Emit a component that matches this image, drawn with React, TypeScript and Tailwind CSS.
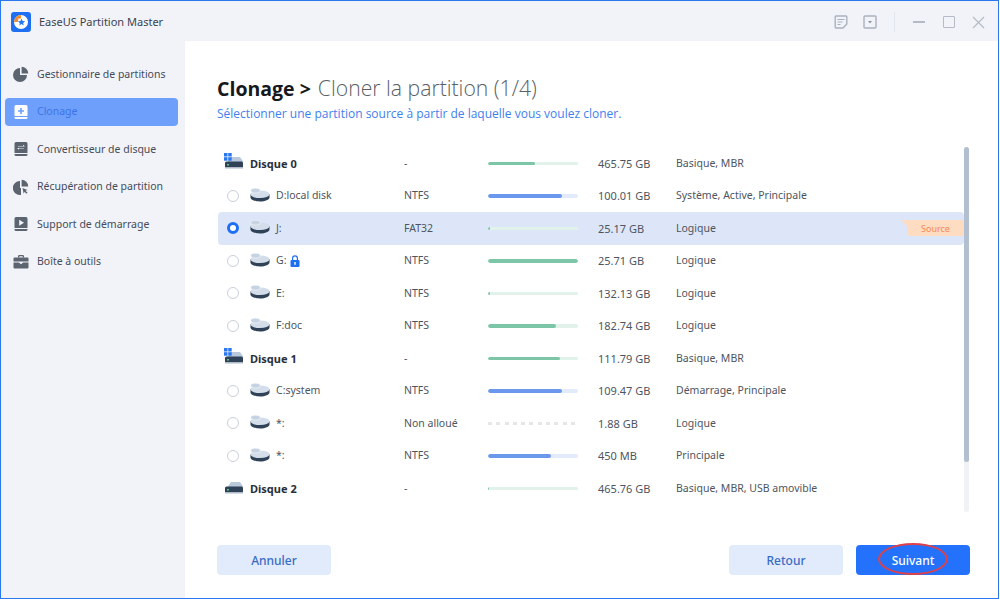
import React from 'react';

const FONT = 'font-["Noto_Sans","Open_Sans",sans-serif]';

type Row =
    | { kind: 'disk'; name: string; icon: 'win' | 'plain'; fs: string; pct: number; color: 'green'; size: string; type: string }
    | { kind: 'part'; name: string; fs: string; pct: number; color: 'green' | 'blue' | 'empty'; size: string; type: string; selected?: boolean; locked?: boolean };

const rows: Row[] = [
    { kind: 'disk', name: 'Disque 0', icon: 'win', fs: '-', pct: 52, color: 'green', size: '465.75 GB', type: 'Basique, MBR' },
    { kind: 'part', name: 'D:local disk', fs: 'NTFS', pct: 82, color: 'blue', size: '100.01 GB', type: 'Système, Active, Principale' },
    { kind: 'part', name: 'J:', fs: 'FAT32', pct: 2, color: 'green', size: '25.17 GB', type: 'Logique', selected: true },
    { kind: 'part', name: 'G:', fs: 'NTFS', pct: 100, color: 'green', size: '25.71 GB', type: 'Logique', locked: true },
    { kind: 'part', name: 'E:', fs: 'NTFS', pct: 2, color: 'green', size: '132.13 GB', type: 'Logique' },
    { kind: 'part', name: 'F:doc', fs: 'NTFS', pct: 76, color: 'green', size: '182.74 GB', type: 'Logique' },
    { kind: 'disk', name: 'Disque 1', icon: 'win', fs: '-', pct: 80, color: 'green', size: '111.79 GB', type: 'Basique, MBR' },
    { kind: 'part', name: 'C:system', fs: 'NTFS', pct: 82, color: 'blue', size: '109.47 GB', type: 'Démarrage, Principale' },
    { kind: 'part', name: '*:', fs: 'Non alloué', pct: 0, color: 'empty', size: '1.88 GB', type: 'Logique' },
    { kind: 'part', name: '*:', fs: 'NTFS', pct: 70, color: 'blue', size: '450 MB', type: 'Principale' },
    { kind: 'disk', name: 'Disque 2', icon: 'plain', fs: '-', pct: 1, color: 'green', size: '465.76 GB', type: 'Basique, MBR, USB amovible' },
];

const PieIcon = () => (
    <svg width="16" height="16" viewBox="0 0 16 16">
        <path d="M7 2a7 7 0 1 0 7 7H7z" fill="#5c6470" />
        <path d="M8.6 0.8a6.6 6.6 0 0 1 6.6 6.6H8.6z" fill="#5c6470" />
    </svg>
);

const CloneIcon = () => (
    <svg width="16" height="16" viewBox="0 0 16 16">
        <path d="M3 1h10a1.5 1.5 0 0 1 1.5 1.5V12h-13V2.5A1.5 1.5 0 0 1 3 1z" fill="#ffffff" />
        <path d="M1.5 13h13v.5A1.5 1.5 0 0 1 13 15H3a1.5 1.5 0 0 1-1.5-1.5z" fill="#ffffff" />
        <path d="M7.2 4h1.6v2.2H11v1.6H8.8V10H7.2V7.8H5V6.2h2.2z" fill="#6ea0fb" />
    </svg>
);

const ConvertIcon = () => (
    <svg width="16" height="16" viewBox="0 0 16 16">
        <path d="M3 1h10a1.5 1.5 0 0 1 1.5 1.5V12h-13V2.5A1.5 1.5 0 0 1 3 1z" fill="#5c6470" />
        <path d="M1.5 13h13v.5A1.5 1.5 0 0 1 13 15H3a1.5 1.5 0 0 1-1.5-1.5z" fill="#5c6470" />
        <path d="M5 5h5V3.800L12 5.600H5zM11 7.500H6v1.200L4 6.900h7z" fill="#f2f3f8" />
    </svg>
);

const RecoverIcon = () => (
    <svg width="16" height="16" viewBox="0 0 16 16">
        <path d="M7 2a7 7 0 1 0 1 13.900V9H7z" fill="#5c6470" />
        <path d="M8.6 0.8a6.6 6.6 0 0 1 6.6 6.6H8.6z" fill="#5c6470" />
        <path d="M9.5 9l5 2-2 .8 2 2-1 1-2-2-.8 2z" fill="#5c6470" />
    </svg>
);

const BootIcon = () => (
    <svg width="16" height="16" viewBox="0 0 16 16">
        <path d="M3 1h10a1.5 1.5 0 0 1 1.5 1.5V12h-13V2.5A1.5 1.5 0 0 1 3 1z" fill="#5c6470" />
        <path d="M1.5 13h13v.5A1.5 1.5 0 0 1 13 15H3a1.5 1.5 0 0 1-1.5-1.5z" fill="#5c6470" />
        <path d="M6.2 3.800L11 6.800 6.200 9.800z" fill="#f2f3f8" />
    </svg>
);

const ToolboxIcon = () => (
    <svg width="16" height="16" viewBox="0 0 16 16">
        <path d="M5 3.500V2.200A1.200 1.200 0 0 1 6.200 1h3.600A1.200 1.200 0 0 1 11 2.200v1.300H9.700V2.300H6.300v1.200z" fill="#5c6470" />
        <path d="M1.500 3.500h13A1 1 0 0 1 15.500 4.500V7.500H.5V4.500A1 1 0 0 1 1.500 3.500z" fill="#5c6470" />
        <path d="M.5 8.500h5.300L8 10.300l2.200-1.800h5.300v5a1 1 0 0 1-1 1h-13a1 1 0 0 1-1-1z" fill="#5c6470" />
    </svg>
);

const menu = [
    { label: 'Gestionnaire de partitions', icon: <PieIcon /> },
    { label: 'Clonage', icon: <CloneIcon />, active: true },
    { label: 'Convertisseur de disque', icon: <ConvertIcon /> },
    { label: 'Récupération de partition', icon: <RecoverIcon /> },
    { label: 'Support de démarrage', icon: <BootIcon /> },
    { label: 'Boîte à outils', icon: <ToolboxIcon /> },
];

const Logo = () => (
    <svg width="20" height="20" viewBox="0 0 20 20">
        <rect width="20" height="20" rx="3" fill="#1f6ff2" />
        <circle cx="10" cy="10" r="7" fill="#ffffff" />
        <path d="M3 10a7 7 0 0 1 7-7v3.500H7.500L6.800 10z" fill="#f28a2e" />
        <path d="M10.500 6.500l1.100 2.400 2.500.3-1.900 1.700.5 2.500-2.200-1.300-2.200 1.300.5-2.500-1.900-1.700 2.500-.3z" fill="#2a78f0" />
    </svg>
);

const DiskIcon = ({ win }: { win: boolean }) => (
    <svg width="22" height="20" viewBox="0 0 22 20">
        <path d="M3.500 9L7 4h9l3.500 5z" fill="#b9c8da" />
        <path d="M1 10A1.500 1.500 0 0 1 2.500 8.500h15A1.500 1.500 0 0 1 19 10v4.500H1z" fill="#2f4257" />
        <rect x="1" y="14.500" width="18" height="1.300" fill="#c9d4e0" />
        <rect x="3" y="11" width="2" height="1.500" fill="#5fc27e" />
        {win && (
            <g fill="#2a78f0">
                <rect x="0" y="0" width="3.500" height="3.500" />
                <rect x="4.200" y="0" width="3.500" height="3.500" />
                <rect x="0" y="4.200" width="3.500" height="3.500" />
                <rect x="4.200" y="4.200" width="3.500" height="3.500" />
            </g>
        )}
    </svg>
);

const PartIcon = () => (
    <svg className="-mt-[2px]" width="20" height="14" viewBox="0 0 20 14">
        <path d="M.5 6v3.500C.5 11.800 4.800 13.500 10 13.500s9.500-1.700 9.500-4V6z" fill="#2f4257" />
        <ellipse cx="10" cy="6.200" rx="9.500" ry="3.800" fill="#d3deea" />
        <ellipse cx="5.500" cy="2.600" rx="4.700" ry="2.400" fill="#c6d3e2" stroke="#ffffff" strokeWidth="0.500" />
    </svg>
);

const LockIcon = () => (
    <svg width="10" height="12" viewBox="0 0 10 12">
        <path d="M2 5V3.200a3 3 0 0 1 6 0V5H6.800V3.200a1.800 1.800 0 0 0-3.600 0V5z" fill="#1f6ff2" />
        <rect x="0.500" y="5" width="9" height="7" rx="1" fill="#1f6ff2" />
        <rect x="4.300" y="7" width="1.400" height="2.800" fill="#ffffff" />
    </svg>
);

const UsageBar = ({ pct, color }: { pct: number; color: 'green' | 'blue' | 'empty' }) => {
    if (color === 'empty') {
        return (
            <div className="w-[90px] h-[3.5px] overflow-hidden flex gap-[4.3px]">
                {Array.from({ length: 12 }).map((_, i) => (
                    <div key={i} className="w-[4px] h-[3.5px] shrink-0 bg-[#e6e7e9]"></div>
                ))}
            </div>
        );
    }
    return (
        <div className={`w-[90px] h-[3.5px] rounded-sm overflow-hidden ${color === 'blue' ? 'bg-[#e3eafa]' : 'bg-[#e0f2ea]'}`}>
            <div
                className={`h-full rounded-sm ${color === 'blue' ? 'bg-[#6b97ec]' : 'bg-[#7cc5a6]'}`}
                style={{ width: `${pct}%` }}
            ></div>
        </div>
    );
};

const ListRow = ({ row }: { row: Row }) => {
    const isDisk = row.kind === 'disk';
    const selected = row.kind === 'part' && row.selected;
    return (
        <div className={`flex items-center h-[32.5px] text-[10.5px] text-[#4e5560] rounded-sm ${selected ? 'bg-[#dce6f8]' : ''}`}>
            <div className="w-[186px] flex items-center shrink-0">
                {isDisk ? (
                    <>
                        <div className="ml-[6px] w-[26px] shrink-0 flex"><DiskIcon win={row.kind === 'disk' && row.icon === 'win'} /></div>
                        <span className="pt-px font-bold text-[11px] text-[#2a2f38]">{row.name}</span>
                    </>
                ) : (
                    <>
                        <div className={`ml-[9px] w-[12px] h-[12px] rounded-full shrink-0 bg-white ${selected ? 'border-[3.5px] border-[#1f6ff2]' : 'border-[1.5px] border-[#c9d0da]'}`}></div>
                        <div className="ml-[11px] w-[26px] shrink-0 flex"><PartIcon /></div>
                        <span className="pt-px flex items-center gap-[4px]">
                            {row.name}
                            {row.kind === 'part' && row.locked && <LockIcon />}
                        </span>
                    </>
                )}
            </div>
            <div className="w-[84px] shrink-0 pt-px">{row.fs}</div>
            <div className="w-[110px] shrink-0"><UsageBar pct={row.pct} color={row.color} /></div>
            <div className="w-[78px] shrink-0 pt-px text-[11px]">{row.size}</div>
            <div className="flex-1 pt-px">{row.type}</div>
            {selected && (
                <div className="relative w-[57px] h-[16px] bg-[#fddcc2] rounded-bl-sm flex items-center justify-center text-[9px] text-[#f58a56]">
                    <span className="absolute left-[-6px] top-0 w-0 h-0 border-t-[6px] border-t-[#fddcc2] border-l-[6px] border-l-transparent"></span>
                    Source
                </div>
            )}
        </div>
    );
};

export default function App() {
    return (
        <div className={`w-[999px] h-[599px] flex flex-col border border-[#2a78f0] bg-[#f2f3f8] overflow-hidden ${FONT}`}>
            <div className="h-[40px] shrink-0 flex items-center pt-[2px]">
                <div className="ml-[10px] flex"><Logo /></div>
                <span className="ml-[8px] text-[11px] text-[#3c4350]">EaseUS Partition Master</span>
                <div className="ml-auto flex items-center">
                    <svg width="14" height="14" viewBox="0 0 14 14" fill="none" stroke="#a9b1bf" strokeWidth="1.400">
                        <path d="M2 1h10a.8.8 0 0 1 .8.8V9L9 13H2a.8.8 0 0 1-.8-.8V1.800A.8.8 0 0 1 2 1z" />
                        <path d="M3.500 4.500h7M3.500 7h5M3.500 9.500h3" strokeWidth="1" />
                    </svg>
                    <svg className="ml-[15px]" width="14" height="14" viewBox="0 0 14 14" fill="none" stroke="#a9b1bf" strokeWidth="1.400">
                        <rect x="1" y="1" width="12" height="12" rx="1" />
                        <path d="M5 6h4L7 8.500z" fill="#8a93a3" stroke="none" />
                    </svg>
                    <div className="ml-[17px] w-px h-[20px] bg-[#e2e7ef]"></div>
                    <div className="ml-[18px] w-[12px] h-[1.5px] bg-[#b4bbc7]"></div>
                    <div className="ml-[18px] w-[12px] h-[12px] border-[1.5px] border-[#b4bbc7] rounded-[1px]"></div>
                    <svg className="ml-[17px] mr-[13px]" width="13" height="13" viewBox="0 0 13 13" stroke="#b4bbc7" strokeWidth="1.200">
                        <path d="M1 1l11 11M12 1L1 12" />
                    </svg>
                </div>
            </div>
            <div className="flex-1 flex min-h-0">
                <div className="w-[184px] shrink-0 pt-[19.5px] pl-[4px] pr-[7px] flex flex-col gap-[10px]">
                    {menu.map(item => (
                        <div
                            key={item.label}
                            className={`h-[27.5px] flex items-center pl-[8px] gap-[8px] rounded-sm text-[10.5px] ${item.active ? 'bg-[#6ea0fb] text-[#3d73ea]' : 'text-[#454c58]'}`}
                        >
                            <span className="w-[16px] shrink-0 flex">{item.icon}</span>
                            <span className="pt-px">{item.label}</span>
                        </div>
                    ))}
                </div>
                <div className="flex-1 bg-white flex flex-col min-w-0 pl-[32px] pr-[28px]">
                    <h1 className="mt-[31px] h-[32px] flex items-baseline leading-[32px] text-[#5a5f66] font-['Open_Sans',sans-serif]">
                        <span className="text-[19.5px] font-bold text-[#15181d]">Clonage &gt;</span>
                        <span className="ml-[7px] text-[21.2px] font-light">Cloner la partition (1/4)</span>
                    </h1>
                    <p className="mt-[1px] text-[12px] leading-[18px] text-[#3f7fee] font-['Open_Sans',sans-serif]">
                        Sélectionner une partition source à partir de laquelle vous voulez cloner.
                    </p>
                    <div className="mt-[24px] ml-[1px] flex h-[365px]">
                        <div className="w-[746px] shrink-0">
                            {rows.map((row, i) => <ListRow key={i} row={row} />)}
                        </div>
                        <div className="w-[5px] shrink-0 bg-[#f0f2f5] rounded-sm">
                            <div className="h-[315px] bg-[#b2bfd0] rounded-sm"></div>
                        </div>
                    </div>
                    <div className="mt-[33px] flex items-center text-[12px] font-medium">
                        <button className="w-[114px] h-[30px] pt-px rounded-sm bg-[#e1ebfb] text-[#3a6cc4]">Annuler</button>
                        <button className="ml-auto w-[114px] h-[30px] pt-px rounded-sm bg-[#e1ebfb] text-[#3a6cc4]">Retour</button>
                        <div className="relative ml-[13px]">
                            <button className="w-[114px] h-[30px] pt-px rounded-sm bg-[#2472fb] text-white">Suivant</button>
                            <div className="absolute left-[22px] top-[-2px] w-[70px] h-[32px] rounded-[50%] border-2 border-[#e0404a]"></div>
                        </div>
                    </div>
                </div>
            </div>
        </div>
    );
}
